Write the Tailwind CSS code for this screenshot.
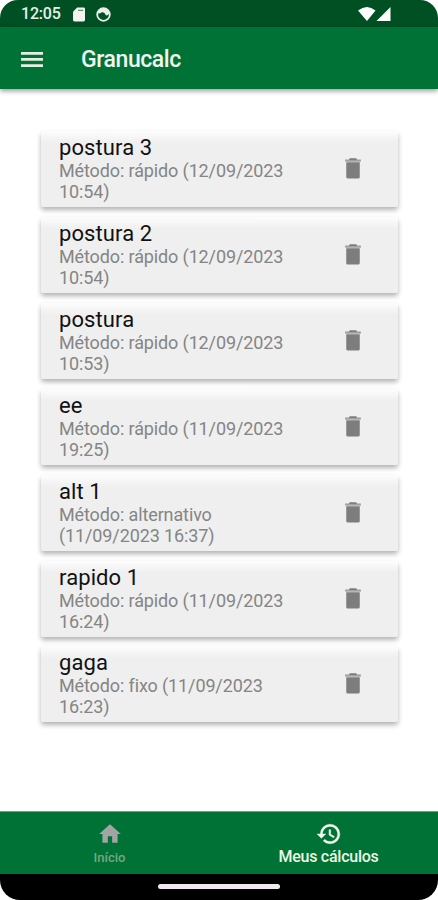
<!DOCTYPE html>
<html lang="pt-BR">
<head>
<meta charset="utf-8">
<title>Granucalc</title>
<script src="https://cdn.jsdelivr.net/npm/@tailwindcss/browser@4"></script>
</head>
<body class="bg-white">
<div class="flex h-[900px] w-[438px] flex-col overflow-hidden rounded-t-[18px] rounded-b-[20px] bg-white font-[Roboto,sans-serif]">
  <div class="flex h-[27px] shrink-0 items-center bg-[#005024] pt-px pl-[21px] text-white">
    <span class="w-[52px] text-[16px] leading-none font-medium tracking-[-0.2px] text-[#e8f0e8]">12:05</span>
    <svg class="h-[15px] w-[12px]" viewBox="0 0 13 15"><path fill="#f4f4f0" d="M4.500 0H11.500Q13 0 13 1.500V13.500Q13 15 11.500 15H1.500Q0 15 0 13.500V4.500Z"/><path stroke="#005024" stroke-opacity=".6" stroke-width="1.200" d="M5.500 3h5.500"/></svg>
    <svg class="ml-[11px] h-[15px] w-[15px]" viewBox="0 0 15 15"><circle cx="7.500" cy="7.500" r="6.300" fill="none" stroke="#e8f0e8" stroke-width="1.800"/><path fill="#e8f0e8" d="M1.500 6Q2 1 7.500 1Q13 1 13.500 6L12 8L10 8.500L8.500 6L6 5L5 6L3 6.500Z"/></svg>
    <svg class="ml-[247px] h-[16px] w-[34px]" viewBox="0 0 34 16"><path fill="#fff" d="M0 4.500Q9 -2.500 17.500 4.500L9 15Z"/><path fill="#fff" d="M32.500 1V15H18.500Z"/></svg>
  </div>
  <header class="relative flex h-[62px] shrink-0 items-center bg-[#007236] pt-[2px] pl-[21px] shadow-[0_2px_5px_rgba(0,0,0,0.4)]">
    <svg class="h-[15px] w-[22px]" viewBox="0 0 22 15"><path fill="#e6efe4" d="M0 0h22v2.700H0zM0 6.100h22v2.700H0zM0 12.200h22v2.700H0z"/></svg>
    <h1 class="ml-[38px] pt-px text-[23px] leading-none font-medium tracking-[-0.42px] text-[#f0f5ee]">Granucalc</h1>
  </header>
  <main id="list" class="flex min-h-0 flex-1 flex-col gap-[9.920px] pr-[40px] pl-[41px] pt-[42px]"></main>
  <nav class="grid h-[63px] shrink-0 grid-cols-2 border-t border-[#6fa287] bg-[#007236]">
    <div class="flex flex-col items-center pt-[9px]">
      <svg class="h-[26px] w-[26px] fill-[#a3a5a4]" viewBox="0 0 24 24"><path d="M10 20v-6h4v6h5v-8h3L12 3 2 12h3v8z"/></svg>
      <span class="mt-[3px] text-[13px] leading-[16px] font-medium text-[#7aa481]">Início</span>
    </div>
    <div class="flex flex-col items-center pt-[9px]">
      <svg class="h-[26px] w-[26px] fill-[#f5faef]" viewBox="0 0 24 24"><path stroke="#f5faef" stroke-width=".4" d="M13 3a9 9 0 0 0-9 9H1l3.890 3.890.07.14L9 12H6c0-3.870 3.130-7 7-7s7 3.130 7 7-3.130 7-7 7c-1.930 0-3.680-.79-4.940-2.060l-1.420 1.420A8.954 8.954 0 0 0 13 21a9 9 0 0 0 0-18zm-1 5v5l4.280 2.540.72-1.210-3.500-2.080V8H12z"/></svg>
      <span class="mt-px text-[16px] leading-[18px] font-medium tracking-[-0.25px] text-[#edf7e4]">Meus cálculos</span>
    </div>
  </nav>
  <div class="flex h-[26px] shrink-0 justify-center bg-black pt-[10px]"><div class="h-[5px] w-[122px] rounded-full bg-[#eee9ee]"></div></div>
</div>
<script>
  const items = [
    ['postura 3', 'Método: rápido (12/09/2023', '10:54)'],
    ['postura 2', 'Método: rápido (12/09/2023', '10:54)'],
    ['postura', 'Método: rápido (12/09/2023', '10:53)'],
    ['ee', 'Método: rápido (11/09/2023', '19:25)'],
    ['alt 1', 'Método: alternativo', '(11/09/2023 16:37)'],
    ['rapido 1', 'Método: rápido (11/09/2023', '16:24)'],
    ['gaga', 'Método: fixo (11/09/2023', '16:23)']
  ];
  document.getElementById('list').innerHTML = items.map(([title, a, b]) => `
    <article class="flex h-[76px] w-[357px] shrink-0 justify-between rounded-[3px] bg-linear-to-b from-[#fdfdfd] to-[#efefef] to-[12px] pr-[36px] pl-[18px] shadow-[0_3px_5px_rgba(0,0,0,0.3)]">
      <div class="whitespace-nowrap pt-[3px]">
        <h2 class="text-[22px] leading-[27px] tracking-[0.1px] text-[#111]">${title}</h2>
        <p class="-mt-px text-[18px] leading-[21px] tracking-[-0.120px] text-[#858585]">${a}<br>${b}</p>
      </div>
      <svg class="mt-[24px] h-[28px] w-[18px] fill-[#7d7d7d]" viewBox="4 1 16 24"><path d="M6 7h12v13q0 1.500-1.500 1.500h-9Q6 21.500 6 20z"/><path fill="#a0a0a0" d="M5 4.500h14v2H5z"/><path d="M9 3.500h6l.5 1.500h-7z"/></svg>
    </article>`).join('');
</script>
</body>
</html>
